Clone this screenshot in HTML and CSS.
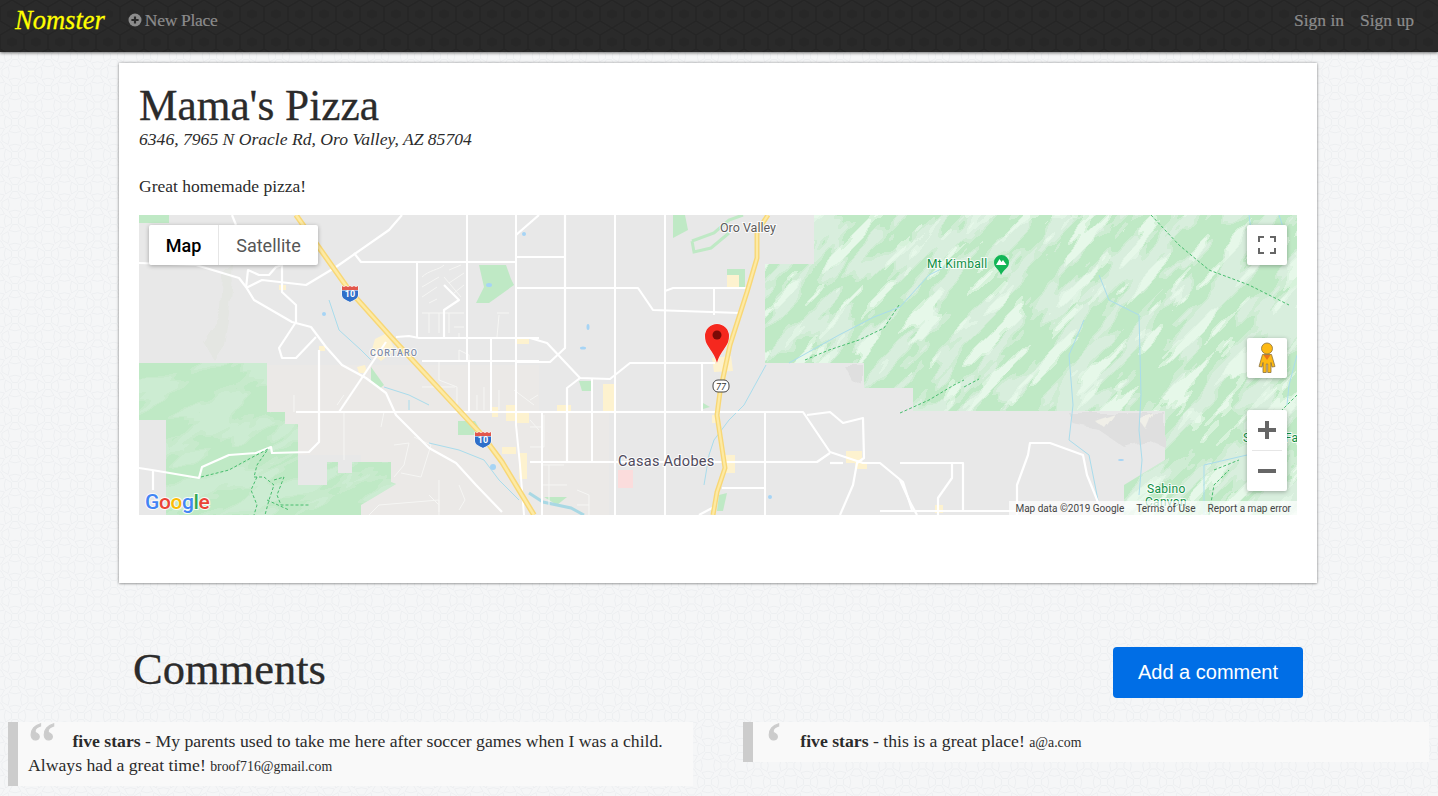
FILE: index.html
```html
<!DOCTYPE html>
<html lang="en">
<head>
<meta charset="utf-8">
<title>Nomster</title>
<link rel="stylesheet" href="styles.css">
</head>
<body>
<header class="nav">
  <a class="brand" href="#">Nomster</a>
  <a class="nav-link new-place" href="#">
    <svg class="plus-icon" viewBox="0 0 14 14" width="14" height="14"><circle cx="7" cy="7" r="6.500" class="plus-disc"/><path d="M7 3.400v7.200M3.400 7h7.200" class="plus-cross"/></svg>
    New Place
  </a>
  <nav class="nav-right">
    <a class="nav-link" href="#">Sign in</a>
    <a class="nav-link" href="#">Sign up</a>
  </nav>
</header>

<main class="card">
  <h1 class="title">Mama's Pizza</h1>
  <p class="address">6346, 7965 N Oracle Rd, Oro Valley, AZ 85704</p>
  <p class="description">Great homemade pizza!</p>

  <div class="map">
    <svg class="map-art" viewBox="0 0 1158 300" width="1158" height="300">
      <defs>
        <clipPath id="forest-east"><path d="M626 49H675V0H1158V300H985V270L1026 245V196H774V198H774V173H725V148H626Z"/></clipPath>
        <clipPath id="forest-west"><path d="M0 148H128V197H146V209H159V270H188V247H199V258H213V247H252V267L257 269L222 290V300H27V205H0Z"/></clipPath>
        <filter id="ridge-dark" x="0" y="0" width="100%" height="100%">
          <feTurbulence type="fractalNoise" baseFrequency=".016 .055" numOctaves="3" seed="4"/>
          <feColorMatrix values="0 0 0 0 .69  0 0 0 0 .86  0 0 0 0 .72  6 0 0 0 -2.700"/>
          <feComponentTransfer><feFuncA type="discrete" tableValues="0 .6 1"/></feComponentTransfer>
        </filter>
        <filter id="ridge-light" x="0" y="0" width="100%" height="100%">
          <feTurbulence type="fractalNoise" baseFrequency=".018 .07" numOctaves="3" seed="11"/>
          <feColorMatrix values="0 0 0 0 .79  0 0 0 0 .94  0 0 0 0 .81  6 0 0 0 -3.300"/>
          <feComponentTransfer><feFuncA type="discrete" tableValues="0 .6 1"/></feComponentTransfer>
        </filter>
        <filter id="rough" x="-5%" y="-5%" width="110%" height="110%">
          <feTurbulence type="fractalNoise" baseFrequency=".05" numOctaves="2" seed="3"/>
          <feDisplacementMap in="SourceGraphic" scale="10"/>
        </filter>
      </defs>
      <rect width="1158" height="300" class="land"/>
      <!-- pale developed ground -->
      <path class="urban" d="M128 150H400V300H222V240H128Z"/>
      <path class="urban" d="M377 197H470V300H377Z"/>
      <!-- forests -->
      <path class="forest" d="M0 148H128V197H146V209H159V270H188V247H199V258H213V247H252V267L257 269L222 290V300H27V205H0Z"/>
      <path class="forest" d="M626 49H675V0H1158V300H985V270L1026 245V196H774V198H774V173H725V148H626Z"/>
      <path class="forest" d="M340 50H367L372 64L375 70L350 88L337 88L345 72Z"/>
      <path class="forest" d="M319 206H336L344 220H319Z"/>
      <path class="forest" d="M232 152L245 170L240 174L232 168Z"/>
      <path class="forest" d="M534 0H546L549 15L534 23Z"/>
      <path class="forest" d="M440 166H453V176H443Z"/>
      <path class="forest" d="M588 54H606V72H588Z"/>
      <path class="forest" d="M564 188L571 192L564 194Z"/>
      <path class="forest" d="M0 0H30V8H0Z"/>
      <path class="forest" d="M405 282L428 282L418 290Z"/>
      <path class="forest" d="M580 280L588 278L584 296L578 296Z"/>
      <path class="forest-ring" d="M553 26L575 18L590 5L604 0M553 26L555 37L572 33L590 18"/>
      <!-- terrain: east range, ridges run lower-left to upper-right -->
      <g clip-path="url(#forest-east)">
        <g transform="rotate(-48 890 150)">
          <rect x="500" y="-340" width="800" height="980" filter="url(#ridge-dark)"/>
          <rect x="500" y="-340" width="800" height="980" filter="url(#ridge-light)"/>
        </g>
      </g>
      <g class="terrain-west" clip-path="url(#forest-west)">
        <g transform="rotate(-25 120 220)">
          <rect x="-140" y="0" width="500" height="420" filter="url(#ridge-dark)"/>
        </g>
      </g>
      <!-- hill shading on grey -->
      <path class="hill" filter="url(#rough)" d="M62 125L72 110L82 95L84 60L95 50L92 85L85 130L75 145Z"/>
      <path class="hill-dark" filter="url(#rough)" d="M704 150H724V170L712 165Z"/>
      <path class="hill-dark" filter="url(#rough)" d="M930 198H1026V232L1010 225L985 232L960 215L935 210Z"/>
      <path class="hill-pale" filter="url(#rough)" d="M955 205L975 198L965 212Z"/>
      <path class="hill-pale" filter="url(#rough)" d="M1000 205L1015 198L1008 215Z"/>
      <!-- yellow commercial patches -->
      <g class="patch">
        <rect x="588" y="60" width="12" height="12"/>
        <rect x="464" y="169" width="12" height="27"/>
        <rect x="418" y="190" width="14" height="7"/>
        <path d="M573 143L592 141L594 156L575 157Z"/>
        <rect x="573" y="200" width="8" height="8"/>
        <rect x="586" y="240" width="10" height="18"/>
        <rect x="707" y="236" width="16" height="12"/>
        <rect x="716" y="248" width="12" height="6"/>
        <path d="M236 124L248 118L256 135L242 146L232 138Z"/>
        <path d="M218 152L226 150L228 158L220 158Z"/>
        <rect x="353" y="192" width="6" height="10"/>
        <rect x="367" y="190" width="11" height="16"/>
        <rect x="378" y="198" width="12" height="10"/>
        <rect x="378" y="122" width="12" height="7"/>
        <rect x="363" y="232" width="14" height="7"/>
        <rect x="380" y="238" width="8" height="26"/>
        <rect x="140" y="70" width="7" height="5"/>
        <rect x="180" y="131" width="6" height="5"/>
        <rect x="796" y="290" width="8" height="8"/>
      </g>
      <rect class="pink" x="479" y="255" width="15" height="18"/>
      <!-- rivers -->
      <g class="river">
        <path d="M190 85L200 115L222 135L232 145"/>
        <path d="M245 172L270 180L290 190M270 185V195"/>
        <path d="M290 228L320 235L345 245L360 265L380 285"/>
        <path d="M627 150L605 190L590 205L575 225L570 240L565 270"/>
        <path d="M650 148L700 120L735 102L761 92L790 60L810 50"/>
        <path d="M960 60L970 85L1000 100L1002 180L1000 215L1003 245L1000 280"/>
        <path d="M945 105L930 140L934 190L930 225L950 240L960 290"/>
        <path d="M1108 240L1065 250L1065 300"/>
        <path d="M1110 0L1112 15M1140 0L1145 15"/>
        <path d="M1158 140L1150 170L1148 190"/>
      </g>
      <path class="river-thick" d="M390 278L404 287L432 293L445 300"/>
      <g class="pond">
        <ellipse cx="185" cy="99" rx="2" ry="2"/>
        <ellipse cx="385" cy="19" rx="2" ry="2"/>
        <ellipse cx="354" cy="252" rx="3" ry="3"/>
        <ellipse cx="449" cy="112" rx="1.500" ry="3"/>
        <ellipse cx="444" cy="133" rx="3" ry="1.500"/>
        <ellipse cx="631" cy="282" rx="2" ry="2"/>
        <ellipse cx="982" cy="245" rx="3" ry="1"/>
        <ellipse cx="350" cy="70" rx="3" ry="2"/>
      </g>
      <!-- minor roads -->
      <g class="road-minor">
        <path d="M283 62C290 55 300 55 305 50M283 72L300 62M283 82L298 72M290 88L298 84M310 55L322 50M310 68L325 58M315 78L325 70M305 62L322 82"/>
        <path d="M283 98H325M290 98V118M300 98V118M310 98V118M315 112H325M320 118V122"/>
        <path d="M358 98H370M360 100L358 122"/>
        <path d="M300 147V165L318 172V197M283 172H316M320 135L330 140V147L320 145Z"/>
        <path d="M338 180V195M345 172V195M360 175V195M375 175L395 190"/>
        <path d="M205 197V245M245 197L242 212M155 180V197M198 190L205 180"/>
        <path d="M255 230L270 228L265 250L255 262M275 222L292 230L282 262L262 258M320 270L326 285L320 295M290 280L300 290M230 300L240 290L300 285V297"/>
        <path d="M405 200V232H391M391 212H403M404 250H425M410 250V290M404 270H428M438 275L450 280V300M438 290H450"/>
        <path d="M391 205L400 215M391 185L399 180"/>
        <path d="M300 265V300"/>
      </g>
      <!-- roads -->
      <g class="road">
        <path d="M0 48L57 50L100 63L107 72L115 85L153 107L172 112L187 132L203 150L227 163L247 178L257 200L290 233L317 248L337 270L363 297"/>
        <path d="M107 73L123 65L167 70L197 52L250 15L263 0"/>
        <path d="M93 0L97 10"/>
        <path d="M107 73L109 55L120 60L130 60L137 52L143 50"/>
        <path d="M177 122L157 143L143 143L140 133L157 107L157 90L143 77L143 50"/>
        <path d="M180 135V227L170 237L133 238L132 232L117 238L90 240L63 252L60 263L13 255L0 253"/>
        <path d="M200 197L247 127"/>
        <path d="M14 255V275"/>
        <path d="M215 38L222 47H377"/>
        <path d="M305 70L320 85L305 95V122"/>
        <path d="M257 122L270 121L280 123H400"/>
        <path d="M283 146H400"/>
        <path d="M157 197H400"/>
        <path d="M377 20L400 0"/>
        <path d="M377 42H426"/>
        <path d="M377 73H426"/>
        <path d="M391 73H499L514 95L601 98"/>
        <path d="M426 0V133L411 147H377"/>
        <path d="M391 123L408 128L441 163L471 164L491 148L576 148"/>
        <path d="M441 163L428 173V247"/>
        <path d="M400 197H664L691 237L724 248H741L764 267L773 295"/>
        <path d="M391 247H678L691 238"/>
        <path d="M668 200L691 197L704 208L724 203L725 243L718 248L714 270L701 300"/>
        <path d="M583 273H626"/>
        <path d="M761 248H824V297"/>
        <path d="M813 248V263L799 283V300"/>
        <path d="M761 265L771 287L778 300"/>
        <path d="M878 300V270L889 240L891 228H911L944 240L948 260L963 297"/>
        <path d="M741 296H878"/>
        <path d="M704 248H691"/>
        <path d="M560 300L575 292"/>
      </g>
      <g class="road-thin">
        <path d="M328 0V147"/>
        <path d="M377 0V210L381 250L385 300"/>
        <path d="M278 48V122"/>
        <path d="M352 123V197"/>
        <path d="M330 147V197"/>
        <path d="M476 0V300"/>
        <path d="M526 0V300"/>
        <path d="M526 76L534 73H608"/>
        <path d="M575 73V100"/>
        <path d="M563 148V197"/>
        <path d="M453 163V247"/>
        <path d="M403 197V300"/>
        <path d="M626 197V300"/>
      </g>
      <!-- trails -->
      <g class="trail">
        <path d="M62 262L90 255L110 244L129 234L118 250L115 262L125 262L135 270L130 285L126 300"/>
        <path d="M135 265L145 262L138 280L142 290H170M128 285L150 295M118 262L112 275L118 290L115 300"/>
        <path d="M666 145L690 135L720 125L745 113L760 90"/>
        <path d="M761 198L790 185L815 170L825 165M825 172L840 164"/>
        <path d="M1012 0L1040 30L1070 55L1110 70L1150 90"/>
        <path d="M1158 180L1140 198L1130 220M1075 255L1100 245M1070 300L1075 270L1090 255"/>
      </g>
      <!-- highways -->
      <path class="hwy-edge" d="M157 0L210 75L253 123L343 220L363 247L395 300"/>
      <path class="hwy" d="M157 0L210 75L253 123L343 220L363 247L395 300"/>
      <path class="hwy-edge hwy-edge-sm" d="M629 0L618 17V43L608 77L591 130L581 177L578 200L586 253L578 277L574 300"/>
      <path class="hwy hwy-sm" d="M629 0L618 17V43L608 77L591 130L581 177L578 200L586 253L578 277L574 300"/>
      <!-- shields -->
      <g transform="translate(211 78)">
        <path class="shield-blue" d="M-8 -3H8V2C8 6 3 7 0 9C-3 7 -8 6 -8 2Z"/>
        <path class="shield-red" d="M-8 -7L-6 -6L-4 -7L-2 -6L0 -7L2 -6L4 -7L6 -6L8 -7V-3H-8Z"/>
        <text class="shield-text" x="0" y="4">10</text>
      </g>
      <g transform="translate(344 224)">
        <path class="shield-blue" d="M-8 -3H8V2C8 6 3 7 0 9C-3 7 -8 6 -8 2Z"/>
        <path class="shield-red" d="M-8 -7L-6 -6L-4 -7L-2 -6L0 -7L2 -6L4 -7L6 -6L8 -7V-3H-8Z"/>
        <text class="shield-text" x="0" y="4">10</text>
      </g>
      <g transform="translate(582 171)">
        <rect class="state-shield" x="-8" y="-6" width="16" height="12" rx="5"/>
        <text class="state-text" x="0" y="3.500">77</text>
      </g>
      <!-- labels -->
      <text class="label label-place" x="581" y="17">Oro Valley</text>
      <text class="label label-town" x="479" y="251">Casas Adobes</text>
      <text class="label label-area" x="231" y="141">CORTARO</text>
      <text class="label label-park" x="788" y="53">Mt Kimball</text>
      <text class="label label-park" x="1008" y="278">Sabino</text>
      <text class="label label-park" x="1006" y="291">Canyon</text>
      <text class="label label-park" x="1104" y="227">Sabino Fall</text>
      <path class="poi" d="M862 60C860 54 855 53 855 47.500A7.500 7.500 0 0 1 870 47.500C870 53 865 54 862 60Z"/>
      <path class="poi-peak" d="M857 50L860.500 44L862.500 47L864 45L867.500 50Z"/>
      <!-- pin -->
      <path class="pin" d="M578 148C576 140 572 136 569 131C567 128 566 125 566 121A12 12 0 1 1 590 121C590 125 589 128 587 131C584 136 580 140 578 148Z"/>
      <circle class="pin-dot" cx="578" cy="120" r="4.500"/>
      <!-- google -->
      <text class="google" x="6" y="294"><tspan class="g-blue">G</tspan><tspan class="g-red">o</tspan><tspan class="g-yellow">o</tspan><tspan class="g-blue">g</tspan><tspan class="g-green">l</tspan><tspan class="g-red">e</tspan></text>
    </svg>

    <div class="map-type">
      <button class="map-type-btn map-type-active">Map</button>
      <button class="map-type-btn">Satellite</button>
    </div>

    <div class="map-ctl ctl-full">
      <svg viewBox="0 0 18 18" width="18" height="18"><path class="ctl-line" d="M1 6V1H6M12 1H17V6M17 12V17H12M6 17H1V12"/></svg>
    </div>
    <div class="map-ctl ctl-peg">
      <svg viewBox="0 0 40 40" width="40" height="40">
        <path class="peg" d="M15.500 16.500H24.500L28 28.500L25 29L24 24.500V34.500H20.700V26H19.300V34.500H16V24.500L15 29L12 28.500Z"/>
        <circle class="peg" cx="20" cy="10.500" r="5.500"/>
        <path class="peg-neck" d="M16.500 17H23.500L20 22Z"/>
      </svg>
    </div>
    <div class="map-zoom">
      <button class="zoom-btn"><svg viewBox="0 0 18 18" width="18" height="18"><path class="zoom-line" d="M9 0V18M0 9H18"/></svg></button>
      <span class="zoom-sep"></span>
      <button class="zoom-btn"><svg viewBox="0 0 18 18" width="18" height="18"><path class="zoom-line" d="M0 9H18"/></svg></button>
    </div>

    <div class="map-foot">
      <span>Map data ©2019 Google</span>
      <span>Terms of Use</span>
      <span>Report a map error</span>
    </div>
  </div>
</main>

<section class="comments-head">
  <h2 class="comments-title">Comments</h2>
  <a class="add-btn" href="#">Add a comment</a>
</section>

<section class="comments">
  <blockquote class="comment"><b>five stars</b> - My parents used to take me here after soccer games when I was a child. Always had a great time! <small>broof716@gmail.com</small></blockquote>
  <blockquote class="comment"><b>five stars</b> - this is a great place! <small>a@a.com</small></blockquote>
</section>
</body>
</html>
```
FILE: styles.css
```css
* { box-sizing: border-box; }
html, body { height: 100%; }
body {
  margin: 0;
  overflow: hidden;
  font-family: "Liberation Serif", serif;
  color: #2b2b2b;
  background-color: #f5f6f7;
  background-image: url("data:image/svg+xml,%3Csvg xmlns='http://www.w3.org/2000/svg' width='33' height='33'%3E%3Cdefs%3E%3Cg id='c' fill='none' stroke='%23edeff1' stroke-width='1'%3E%3Cpath d='M-2.500-3.500L2.500-3.500L6-9.500Q0-12-6-9.500Z'/%3E%3Cpath d='M3.500-2.500L3.500 2.500L9.500 6Q12 0 9.500-6Z'/%3E%3Cpath d='M-2.500 3.500L2.500 3.500L6 9.500Q0 12-6 9.500Z'/%3E%3Cpath d='M-3.500-2.500L-3.500 2.500L-9.500 6Q-12 0-9.500-6Z'/%3E%3C/g%3E%3C/defs%3E%3Cuse href='%23c' x='16.500' y='16.500'/%3E%3Cuse href='%23c' x='0' y='0'/%3E%3Cuse href='%23c' x='33' y='0'/%3E%3Cuse href='%23c' x='0' y='33'/%3E%3Cuse href='%23c' x='33' y='33'/%3E%3C/svg%3E");
  background-position: 14.5px -10.5px;
}

/* navbar */
.nav {
  display: flex;
  align-items: center;
  height: 52px;
  padding: 0 24px 12px 15px;
  background-color: #2a2a2a;
  background-image: url("data:image/svg+xml,%3Csvg xmlns='http://www.w3.org/2000/svg' width='24' height='28'%3E%3Cpath d='M12 0L24 7V21L12 28L0 21V7Z' fill='none' stroke='%23252525' stroke-width='1.500'/%3E%3Cpath d='M12 9L17 11.500V16.500L12 19L7 16.500V11.500Z' fill='%23272727'/%3E%3C/svg%3E");
  box-shadow: 0 1px 3px rgba(0, 0, 0, .55);
}
.brand {
  font-size: 26.500px;
  font-style: italic;
  color: #ffff00;
  text-decoration: none;
  -webkit-text-stroke: .3px #ffff00;
}
.nav-link {
  font-size: 17.500px;
  color: #8c8c8c;
  text-decoration: none;
  -webkit-text-stroke: .2px #8c8c8c;
}
.new-place {
  display: flex;
  align-items: center;
  gap: 3px;
  margin-left: 23px;
  letter-spacing: -.3px;
}
.plus-disc { fill: #8c8c8c; }
.plus-cross { stroke: #2a2a2a; stroke-width: 2.200; fill: none; }
.nav-right {
  display: flex;
  gap: 16px;
  margin-left: auto;
}

/* card */
.card {
  width: 1198px;
  height: 520px;
  margin: 11px 0 0 119px;
  padding: 20px;
  background: #fff;
  box-shadow: 0 0 3px rgba(0, 0, 0, .35), 0 1px 2px rgba(0, 0, 0, .2);
}
.title {
  margin: 0;
  font-size: 43.300px;
  font-weight: 400;
  line-height: 44px;
  -webkit-text-stroke: .3px #2b2b2b;
}
.address {
  margin: 0;
  font-size: 17.600px;
  font-style: italic;
  line-height: 24px;
}
.description {
  margin: 23px 0 17px;
  font-size: 17.500px;
  line-height: 24px;
}

/* map */
.map {
  position: relative;
  width: 1158px;
  height: 300px;
  overflow: hidden;
  font-family: Roboto, sans-serif;
}
.map-art { display: block; }
.land { fill: #e8e8e8; }
.urban { fill: #ebe9e7; }
.forest { fill: #bfe9c5; }
.forest-ring { fill: none; stroke: #bfe9c5; stroke-width: 3; }
.terrain-west { opacity: .55; }
.hill { fill: #e4e6e2; }
.hill-dark { fill: #dfdfdf; }
.hill-pale { fill: #f0efe8; }
.patch rect, .patch path { fill: #fdf2cf; }
.pink { fill: #fbdcdc; }
.river path { fill: none; stroke: #a9dcec; stroke-width: 1; }
.river-thick { fill: none; stroke: #a9d8e4; stroke-width: 3; }
.pond ellipse { fill: #a6d4f5; }
.road-minor path { fill: none; stroke: #f6f6f4; stroke-width: 1; }
.road path { fill: none; stroke: #fff; stroke-width: 2.200; stroke-linejoin: round; }
.road-thin path { fill: none; stroke: #fff; stroke-width: 2; }
.trail path { fill: none; stroke: #48bd6e; stroke-width: 1; stroke-dasharray: 3 2; }
.hwy-edge { fill: none; stroke: #f8d776; stroke-width: 5.500; stroke-linejoin: round; }
.hwy { fill: none; stroke: #fdeaa4; stroke-width: 2.600; stroke-linejoin: round; }
.hwy-edge-sm { stroke-width: 5; }
.hwy-sm { stroke-width: 2.200; }
.shield-blue { fill: #2f6fc9; stroke: #fff; stroke-width: 1; paint-order: stroke; }
.shield-red { fill: #e2574c; stroke: #fff; stroke-width: 1; paint-order: stroke; }
.shield-text { font-family: Roboto, sans-serif; font-size: 9px; font-weight: 700; fill: #fff; text-anchor: middle; }
.state-shield { fill: #fff; stroke: #444; stroke-width: 1; }
.state-text { font-family: Roboto, sans-serif; font-size: 9px; font-style: italic; fill: #333; text-anchor: middle; }
.label {
  font-family: Roboto, sans-serif;
  paint-order: stroke;
  stroke: rgba(255, 255, 255, .85);
  stroke-width: 2px;
}
.label-place { font-size: 12.500px; fill: #5b5b5b; }
.label-town { font-size: 14.500px; fill: #4f4a5c; letter-spacing: .3px; }
.label-area { font-size: 9px; fill: #7d8ba6; letter-spacing: 1.100px; font-weight: 500; }
.label-park { font-size: 12px; fill: #0b8f43; letter-spacing: .3px; }
.poi { fill: #12b556; }
.poi-peak { fill: #fff; }
.pin { fill: #f5281e; stroke: rgba(255, 255, 255, .7); stroke-width: 1; paint-order: stroke; }
.pin-dot { fill: #7c0a06; }
.google {
  font-family: Roboto, sans-serif;
  font-size: 21px;
  font-weight: 500;
  letter-spacing: -.4px;
  paint-order: stroke;
  stroke: rgba(255, 255, 255, .85);
  stroke-width: 2px;
}
.g-blue { fill: #4285f4; }
.g-red { fill: #ea4335; }
.g-yellow { fill: #fbbc05; }
.g-green { fill: #34a853; }

.map-type {
  position: absolute;
  top: 10px;
  left: 10px;
  display: flex;
  height: 40px;
  background: #fff;
  border-radius: 2px;
  box-shadow: 0 1px 4px rgba(0, 0, 0, .3);
}
.map-type-btn {
  padding: 0;
  width: 99px;
  font: 400 18px Roboto, sans-serif;
  color: #565656;
  background: none;
  border: 0;
}
.map-type-active {
  width: 70px;
  font-weight: 500;
  color: #000;
  border-right: 1px solid #e6e6e6;
}
.map-ctl {
  position: absolute;
  right: 10px;
  display: flex;
  align-items: center;
  justify-content: center;
  width: 40px;
  height: 40px;
  background: #fff;
  border-radius: 2px;
  box-shadow: 0 1px 4px rgba(0, 0, 0, .3);
}
.ctl-full { top: 10px; }
.ctl-peg { top: 123px; }
.ctl-line { fill: none; stroke: #666; stroke-width: 2; }
.peg { fill: #fdb913; stroke: #8a7240; stroke-width: .8; }
.peg-neck { fill: #e8741a; }
.map-zoom {
  position: absolute;
  top: 195px;
  right: 10px;
  display: flex;
  flex-direction: column;
  align-items: center;
  width: 40px;
  height: 81px;
  background: #fff;
  border-radius: 2px;
  box-shadow: 0 1px 4px rgba(0, 0, 0, .3);
}
.zoom-btn {
  display: flex;
  align-items: center;
  justify-content: center;
  width: 40px;
  height: 40px;
  padding: 0;
  background: none;
  border: 0;
}
.zoom-sep {
  width: 30px;
  height: 1px;
  background: #e6e6e6;
}
.zoom-line { fill: none; stroke: #666; stroke-width: 4; }
.map-foot {
  position: absolute;
  right: 0;
  bottom: 0;
  display: flex;
  align-items: center;
  gap: 12px;
  height: 14px;
  padding: 0 6px;
  font-size: 10px;
  color: #444;
  background: rgba(255, 255, 255, .7);
}

/* comments */
.comments-head {
  display: flex;
  align-items: center;
  justify-content: space-between;
  margin-top: 64px;
  padding: 0 135px 0 133px;
}
.comments-title {
  margin: 0 0 6px;
  font-size: 44.500px;
  font-weight: 400;
  line-height: 45px;
  -webkit-text-stroke: .3px #2b2b2b;
}
.add-btn {
  display: flex;
  align-items: center;
  justify-content: center;
  width: 190px;
  height: 51px;
  font: 400 20px "Liberation Sans", sans-serif;
  color: #fff;
  text-decoration: none;
  background: #006ee6;
  border-radius: 4px;
}
.comments {
  display: grid;
  grid-template-columns: 685px 686px;
  column-gap: 50px;
  align-items: start;
  margin-top: 24px;
  padding-left: 8px;
}
.comment {
  margin: 0;
  padding: 7px 10px 7px;
  font-size: 17.700px;
  line-height: 24px;
  background: #f9f9f9;
  border-left: 10px solid #ccc;
  quotes: "\201C" "\201D" "\2018" "\2019";
}
.comment::before {
  content: open-quote;
  margin-right: .25em;
  font-size: 64px;
  line-height: 0;
  color: #ccc;
  vertical-align: -.3em;
  -webkit-text-stroke: 1px #ccc;
}
.comment small { font-size: 13.800px; }
```
